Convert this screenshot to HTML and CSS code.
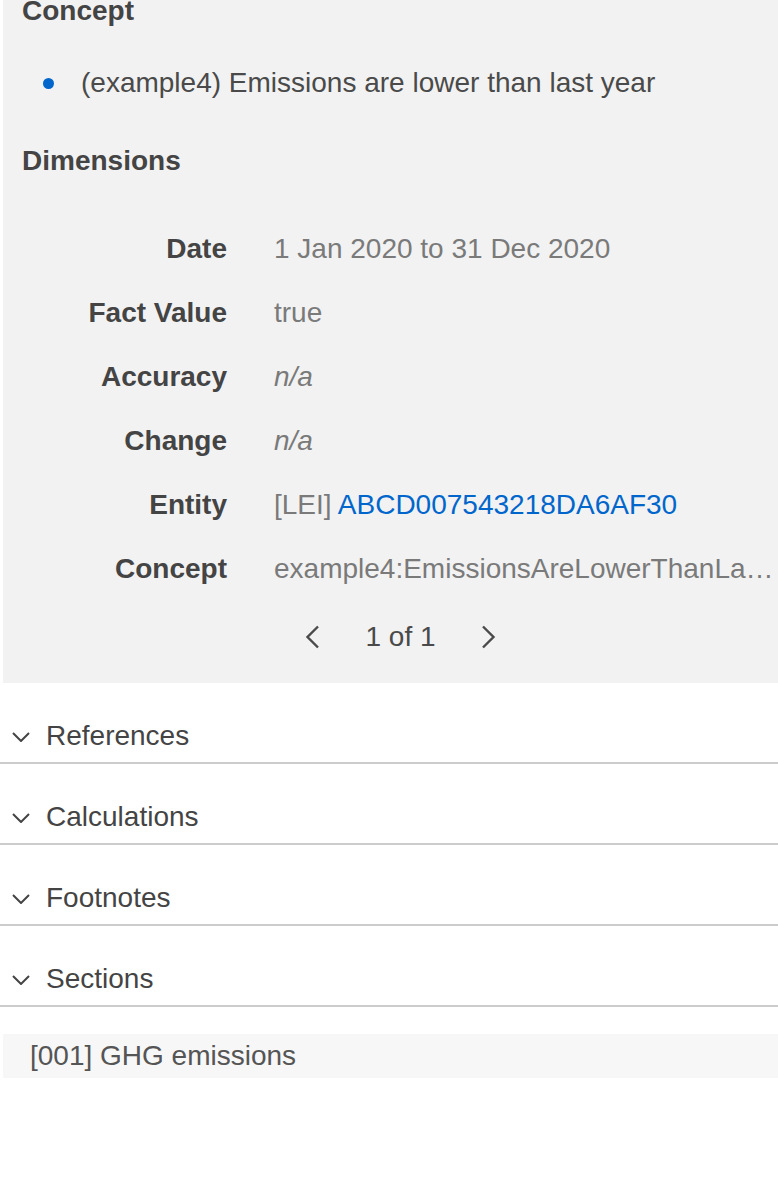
FILE: index.html
```html
<!DOCTYPE html>
<html lang="en">
<head>
<meta charset="utf-8">
<title>Fact details</title>
<link rel="stylesheet" href="styles.css">
</head>
<body>
<div class="panel">
  <h3 class="panel-title">Concept</h3>
  <ul class="concept-list">
    <li>(example4) Emissions are lower than last year</li>
  </ul>
  <h3 class="panel-title dims-title">Dimensions</h3>
  <div class="dims">
    <div class="dim-label">Date</div>
    <div class="dim-value">1 Jan 2020 to 31 Dec 2020</div>
    <div class="dim-label">Fact Value</div>
    <div class="dim-value">true</div>
    <div class="dim-label">Accuracy</div>
    <div class="dim-value na">n/a</div>
    <div class="dim-label">Change</div>
    <div class="dim-value na">n/a</div>
    <div class="dim-label">Entity</div>
    <div class="dim-value">[LEI] <a class="link" href="#">ABCD007543218DA6AF30</a></div>
    <div class="dim-label">Concept</div>
    <div class="dim-value">example4:EmissionsAreLowerThanLastYear</div>
  </div>
  <div class="pager">
    <svg class="pager-arrow" width="15" height="24" viewBox="0 0 15 24"><path d="M13 1.5 L2.5 12 L13 22.5" fill="none" stroke="#4a4a4a" stroke-width="2.4"/></svg>
    <span class="pager-text">1 of 1</span>
    <svg class="pager-arrow" width="15" height="24" viewBox="0 0 15 24"><path d="M2 1.5 L12.5 12 L2 22.5" fill="none" stroke="#4a4a4a" stroke-width="2.4"/></svg>
  </div>
</div>

<div class="accordion">
  <div class="acc-header">
    <svg class="acc-chevron" width="18" height="10" viewBox="0 0 18 10"><path d="M1 1 L9 9 L17 1" fill="none" stroke="#444" stroke-width="2"/></svg>
    <span>References</span>
  </div>
  <div class="acc-header">
    <svg class="acc-chevron" width="18" height="10" viewBox="0 0 18 10"><path d="M1 1 L9 9 L17 1" fill="none" stroke="#444" stroke-width="2"/></svg>
    <span>Calculations</span>
  </div>
  <div class="acc-header">
    <svg class="acc-chevron" width="18" height="10" viewBox="0 0 18 10"><path d="M1 1 L9 9 L17 1" fill="none" stroke="#444" stroke-width="2"/></svg>
    <span>Footnotes</span>
  </div>
  <div class="acc-header">
    <svg class="acc-chevron" width="18" height="10" viewBox="0 0 18 10"><path d="M1 1 L9 9 L17 1" fill="none" stroke="#444" stroke-width="2"/></svg>
    <span>Sections</span>
  </div>
  <div class="section-item">[001] GHG emissions</div>
</div>
</body>
</html>
```

FILE: styles.css
```css
html, body {
  margin: 0;
  padding: 0;
  background: #ffffff;
}

body {
  font-family: "Liberation Sans", Arial, sans-serif;
  font-size: 28px;
  line-height: 32px;
  color: #444444;
  overflow: hidden;
}

.panel {
  background: #f2f2f2;
  margin: -5px 0 0 3px;
  padding: 0 0 10px 19px;
}

.panel-title {
  margin: 0;
  font-size: 28px;
  line-height: 32px;
  font-weight: bold;
  color: #444444;
}

.concept-list {
  list-style: none;
  margin: 40px 0 0 0;
  padding: 0 0 0 59px;
}

.concept-list li {
  position: relative;
  color: #4a4a4a;
}

.concept-list li::before {
  content: "";
  position: absolute;
  left: -38px;
  top: 11px;
  width: 11px;
  height: 11px;
  border-radius: 50%;
  background: #0066cc;
}

.dims-title {
  margin-top: 46px;
}

.dims {
  margin-top: 40px;
  display: grid;
  grid-template-columns: 205px minmax(0, 1fr);
  column-gap: 47px;
}

.dim-label,
.dim-value {
  padding: 16px 0;
  white-space: nowrap;
}

.dim-label {
  text-align: right;
  font-weight: bold;
  color: #444444;
}

.dim-value {
  color: #7a7a7a;
  overflow: hidden;
  text-overflow: ellipsis;
}

.dim-value.na {
  font-style: italic;
}

.link {
  color: #0066cc;
  text-decoration: none;
}

.pager {
  height: 72px;
  display: flex;
  align-items: center;
  justify-content: center;
  gap: 45px;
  padding-left: 1px;
}

.pager-arrow {
  display: block;
}

.pager-text {
  color: #4a4a4a;
}

.accordion {
  display: flex;
  flex-direction: column;
}

.acc-header {
  display: flex;
  align-items: center;
  gap: 16px;
  padding: 37px 0 10px 12px;
  border-bottom: 2px solid #cccccc;
  color: #444444;
}

.acc-chevron {
  display: block;
  margin-top: 2px;
}

.section-item {
  margin: 27px 0 0 3px;
  padding: 6px 0 6px 27px;
  background: #f7f7f7;
  color: #555555;
}
```
